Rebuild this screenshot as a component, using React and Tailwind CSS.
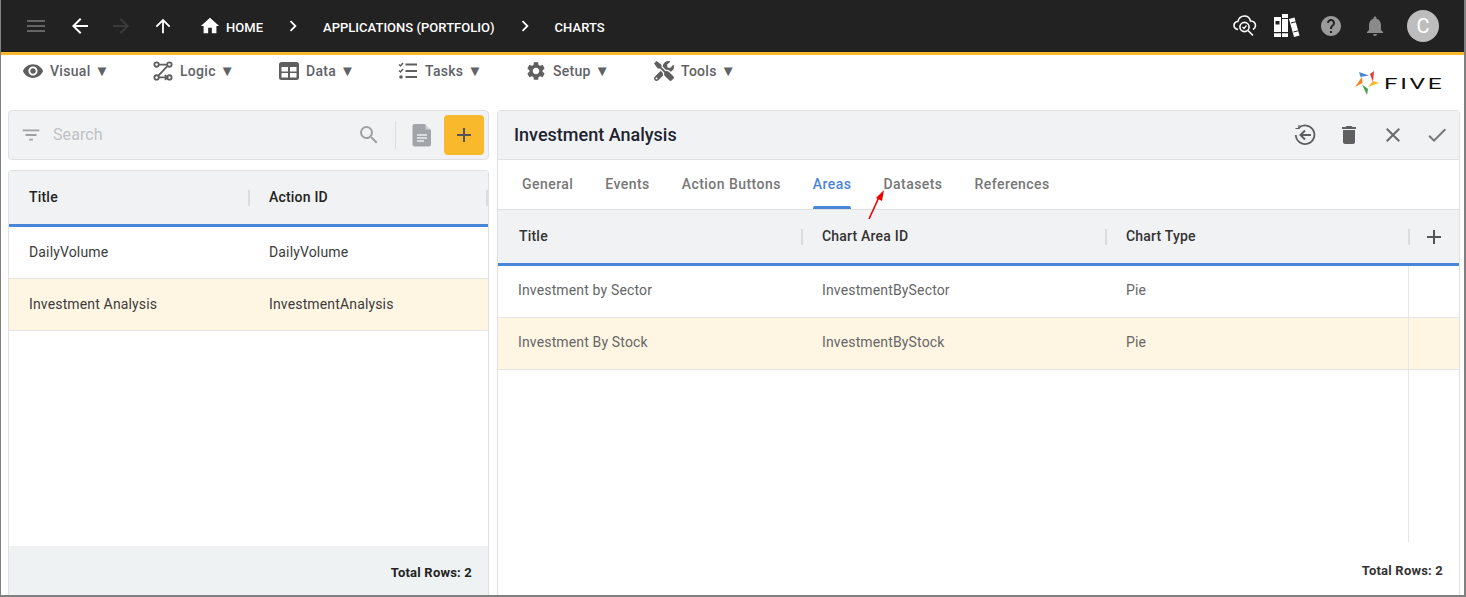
import React from "react";
import { MdMenu, MdArrowBack, MdArrowForward, MdArrowUpward, MdHome, MdChevronRight, MdHelp, MdNotifications, MdVisibility, MdSettings, MdFilterList, MdSearch, MdAdd, MdDelete, MdClose, MdCheck } from "react-icons/md";
import { FaTools } from "react-icons/fa";

const LogicIcon = () => (
  <svg width="22" height="22" viewBox="0 0 24 24" fill="none" stroke="#5f5f5f" strokeWidth="2">
    <circle cx="5" cy="5" r="2.4" /><circle cx="19" cy="5" r="2.4" /><circle cx="5" cy="19" r="2.4" /><circle cx="19" cy="19" r="2.4" />
    <path d="M7.5 5h9M16.5 7 7 17M7.5 19h9" />
    <path d="M14 16.5 16.8 19 14 21.5" />
  </svg>
);
const DataIcon = () => (
  <svg width="22" height="22" viewBox="0 0 22 22"><rect x="1" y="2" width="20" height="18" rx="2.5" fill="#5f5f5f" /><rect x="3.5" y="7" width="6.5" height="4.5" fill="#fff" /><rect x="12" y="7" width="6.5" height="4.5" fill="#fff" /><rect x="3.5" y="13" width="6.5" height="4.5" fill="#fff" /><rect x="12" y="13" width="6.5" height="4.5" fill="#fff" /></svg>
);
const TasksIcon = () => (
  <svg width="22" height="22" viewBox="0 0 22 22" fill="none" stroke="#5f5f5f"><path d="M2 4.5 3.5 6 6 3M2 10.5 3.5 12 6 9" strokeWidth="1.5" /><circle cx="4" cy="17" r="1.8" fill="#5f5f5f" stroke="none" /><path d="M8.5 4.5H20M8.5 11H20M8.5 17H20" strokeWidth="2" /></svg>
);
const CloudSearch = () => (
  <svg width="24" height="24" viewBox="0 0 24 24" fill="none" stroke="#fff" strokeWidth="1.6"><path d="M5 15.500C2.500 15 1 13.500 1 11.500c0-2.300 1.800-3.800 3.800-4C5.800 4 8.500 2 11.500 2c3 0 5.300 2 6 5 2.900.2 5 2 5 4.500 0 1.800-1 3.200-2.500 4" /><circle cx="11.500" cy="13" r="4.600" /><path d="M15 16.500 20 21.500" /><path d="m9.500 13 1.500 1.500 2.500-3" strokeWidth="1.200" /></svg>
);
const Books = () => (
  <svg width="26" height="26" viewBox="0 0 26 26"><path fill="#fff" d="M0 4h7v20H0zM8 1h6v23H8z" /><path fill="#fff" d="m15 6 5.500-1.500 5 18L20 24z" /><path fill="#222" d="M1.500 8h4v3.500h-4zM0 19h7v1.200H0zM8 5h6v1H8zM8 19h6v1.200H8z" /><path stroke="#222" strokeWidth="1" d="m17 10 5-1.300M19.500 19l5-1.300" /></svg>
);
const BackCircle = () => (
  <svg width="22" height="22" viewBox="0 0 22 22" fill="none" stroke="#5f5f5f" strokeWidth="1.800"><path d="M4.500 4.200A9.300 9.300 0 1 1 1.800 11" /><path d="M1.500 4.500 5 4.500 5 1" strokeWidth="1.200" /><path d="M17 11H6.500M11 6.500 6.500 11l4.500 4.500" strokeWidth="2" /></svg>
);
const FileIcon = () => (
  <svg width="20" height="24" viewBox="0 0 20 24"><path fill="#a1a4a8" d="M2.500 1H13l6 6v14.500a2 2 0 0 1-2 2H2.500a2 2 0 0 1-2-2V3a2 2 0 0 1 2-2z" /><path fill="#fff" d="M13.500 1 19 6.500h-5.500z" opacity=".5" /><path stroke="#eceded" strokeWidth="1.300" d="M5 12h10M5 15h10M5 18h7" /></svg>
);
const FiveLogo = () => (
  <div className="flex items-center gap-[5px]">
    <svg width="24" height="25" viewBox="0 0 24 25">
      <path fill="#4a86d8" d="M4 1 14 4.500 5.500 6z" />
      <path fill="#e53935" d="M19 0 18 11 15 3z" />
      <path fill="#fbb829" d="M24 12 13 16 18 10z" />
      <path fill="#43a047" d="M12 24 7 13.500 13 18z" />
      <path fill="#f58220" d="M0 16 7 6 7.500 12z" />
    </svg>
    <span className="w-[60px] text-[#111] text-[14px] leading-none font-normal tracking-[1.500px] scale-x-[1.750] origin-left">FIVE</span>
  </div>
);

const Crumb = ({ children }) => <span className="text-white text-[13px] font-medium uppercase tracking-[0.03px]">{children}</span>;
const Menu = ({ icon, label, className }) => (
  <div className={`flex items-center gap-[5px] text-[14px] font-medium text-[#5f6368] ${className}`}>
    <span className="w-[22px] h-[22px] flex items-center justify-center text-[#5f5f5f]">{icon}</span>
    <span className="tracking-[0.3px] ml-px">{label}</span>
    <span className="text-[15px] leading-none -ml-px">▼</span>
  </div>
);
const Divider = () => <span className="absolute right-0 top-1/2 -translate-y-1/2 w-[2px] h-[16px] bg-[#dcdcdc]" />;

const Rows = ({ rows, widths, text }) => rows.map((r, i) => (
  <div key={i} className={`flex h-[52px] items-center border-b border-[#e6e6e6] text-[14px] tracking-[0.15px] ${text} ${i === 1 ? "bg-[#fff5e3]" : "bg-white"}`}>
    {r.map((c, j) => <div key={j} className={widths[j]}>{c}</div>)}
  </div>
));

export default function App() {
  return (
    <div className="w-[1466px] h-[597px] overflow-hidden flex flex-col bg-white border-l border-b-2 border-r-2 border-[#808080] font-['Roboto',sans-serif]">
      <header className="h-[55px] shrink-0 bg-[#222222] border-b-[3px] border-[#f9b92d] flex items-center pl-[24px] pr-[26px] -ml-px">
        <MdMenu size={24} className="text-[#666]" />
        <MdArrowBack size={24} className="text-white ml-[20px]" />
        <MdArrowForward size={24} className="text-[#3a3a3a] ml-[17px]" />
        <MdArrowUpward size={22} className="text-white ml-[19px]" />
        <MdHome size={22} className="text-white ml-[25px]" />
        <span className="ml-[5px] pt-[2px]"><Crumb>Home</Crumb></span>
        <MdChevronRight size={22} className="text-white ml-[19px]" />
        <span className="ml-[19px] pt-[2px]"><Crumb>Applications (Portfolio)</Crumb></span>
        <MdChevronRight size={22} className="text-white ml-[19px]" />
        <span className="ml-[19px] pt-[2px]"><Crumb>Charts</Crumb></span>
        <div className="ml-auto flex items-center">
          <CloudSearch />
          <span className="ml-[17px]"><Books /></span>
          <MdHelp size={24} className="text-[#9a9a9a] ml-[19px]" />
          <MdNotifications size={24} className="text-[#8a8a8a] ml-[20px]" />
          <div className="ml-[20px] -mr-px w-[32px] h-[32px] rounded-full bg-[#bdbdbd] text-white text-[20px] flex items-center justify-center">C</div>
        </div>
      </header>

      <div className="h-[55px] shrink-0 relative flex items-start pt-[5px] pl-[21px]">
        <Menu icon={<MdVisibility size={22} />} label="Visual" className="w-[130px]" />
        <Menu icon={<LogicIcon />} label="Logic" className="w-[126px]" />
        <Menu icon={<DataIcon />} label="Data" className="w-[119px]" />
        <Menu icon={<TasksIcon />} label="Tasks" className="w-[128px]" />
        <Menu icon={<MdSettings size={24} />} label="Setup" className="w-[128px]" />
        <Menu icon={<FaTools size={20} />} label="Tools" className="w-[110px]" />
        <div className="absolute left-[1354px] top-[16px]"><FiveLogo /></div>
      </div>

      <div className="flex-1 min-h-0 flex pl-[7px] pr-[4px] gap-[8px]">
        <div className="w-[481px] shrink-0 flex flex-col gap-[10px]">
          <div className="h-[50px] shrink-0 rounded-[4px] border border-[#e0e0e0] bg-[#f1f2f4] flex items-center pl-[11px] pr-[4px]">
            <MdFilterList size={22} className="text-[#a0a0a0]" />
            <span className="ml-[11px] text-[16px] tracking-[0.1px] text-[#c0c2c5] flex-1">Search</span>
            <MdSearch size={24} className="text-[#a0a0a0] mr-[9px]" />
            <span className="ml-[5px] w-px h-[28px] bg-[#dcdcdc]" />
            <span className="ml-[16px]"><FileIcon /></span>
            <div className="ml-[12px] w-[40px] h-[40px] rounded-[4px] bg-[#f9b92d] flex items-center justify-center"><MdAdd size={24} className="text-[#555]" /></div>
          </div>
          <div className="flex-1 min-h-0 flex flex-col rounded-t-[4px] border-x border-t border-[#e0e0e0]">
            <div className="h-[56px] shrink-0 bg-[#f1f2f4] border-b-[3px] border-[#4a86d8] flex items-center text-[14px] font-medium tracking-[0.2px] text-[#222]">
              <div className="relative w-[241px] pl-[20px]">Title<Divider /></div>
              <div className="relative flex-1 pl-[19px] pr-px">Action ID<Divider /></div>
            </div>
            <Rows rows={[["DailyVolume", "DailyVolume"], ["Investment Analysis", "InvestmentAnalysis"]]} widths={["w-[241px] pl-[20px]", "flex-1 pl-[19px]"]} text="text-[#3c3c3c]" />
            <div className="flex-1" />
            <div className="h-[49px] shrink-0 bg-[#eef2f3] flex items-center justify-end pr-[16px] pt-[4px] text-[13px] font-bold tracking-[0.2px] text-[#222]">Total Rows: 2</div>
          </div>
        </div>

        <div className="flex-1 min-w-0 flex flex-col rounded-t-[4px] border-x border-t border-[#e0e0e0]">
          <div className="h-[49px] shrink-0 bg-[#f1f2f4] border-b border-[#e0e0e0] flex items-center pl-[16px] pr-[10px]">
            <span className="text-[18px] font-medium text-[#1d2430] flex-1 pb-[2px]">Investment Analysis</span>
            <BackCircle />
            <MdDelete size={24} className="text-[#5f5f5f] ml-[21px]" />
            <MdClose size={24} className="text-[#6a6a6a] ml-[20px]" />
            <MdCheck size={24} className="text-[#777] ml-[20px]" />
          </div>
          <div className="h-[50px] shrink-0 relative border-b border-[#e0e0e0] flex items-center pl-[24px] gap-[32px] text-[14px] font-medium tracking-[0.45px] text-[#777]">
            <span>General</span><span>Events</span><span>Action Buttons</span>
            <span className="relative text-[#4a86d8] h-full flex items-center">Areas<span className="absolute left-0 right-0 bottom-0 h-[3px] rounded-t-[2px] bg-[#4a86d8]" /></span>
            <span>Datasets</span><span>References</span>
            <svg className="absolute left-[368px] top-[29px]" width="20" height="32" viewBox="0 0 20 32"><path d="M3 30 14 6" stroke="#f00000" strokeWidth="1.600" /><path d="m18 1-2 11-6-3z" fill="#f00000" /></svg>
          </div>
          <div className="h-[56px] shrink-0 bg-[#f1f2f4] border-b-[3px] border-[#4a86d8] flex items-center text-[14px] font-medium tracking-[0.2px] text-[#333]">
            <div className="relative w-[305px] pl-[21px]">Title<Divider /></div>
            <div className="relative w-[304px] pl-[19px]">Chart Area ID<Divider /></div>
            <div className="relative w-[303px] pl-[19px]">Chart Type<Divider /></div>
            <div className="flex-1 flex justify-center pr-[1px]"><MdAdd size={24} className="text-[#555]" /></div>
          </div>
          <Rows rows={[["Investment by Sector", "InvestmentBySector", "Pie"], ["Investment By Stock", "InvestmentByStock", "Pie"]]} widths={["w-[304px] pl-[20px] pb-[2px]", "w-[304px] pl-[20px] pb-[2px]", "w-[303px] pl-[20px] pb-[2px] border-r border-[#e6e6e6] h-full flex items-center"]} text="text-[#666]" />
          <div className="flex-1 min-h-0 flex"><div className="w-[911px] border-r border-[#e6e6e6]" /></div>
          <div className="h-[53px] shrink-0 flex items-center justify-end pr-[16px] pt-[4px] text-[13px] font-bold tracking-[0.2px] text-[#333]">Total Rows: 2</div>
        </div>
      </div>
    </div>
  );
}
